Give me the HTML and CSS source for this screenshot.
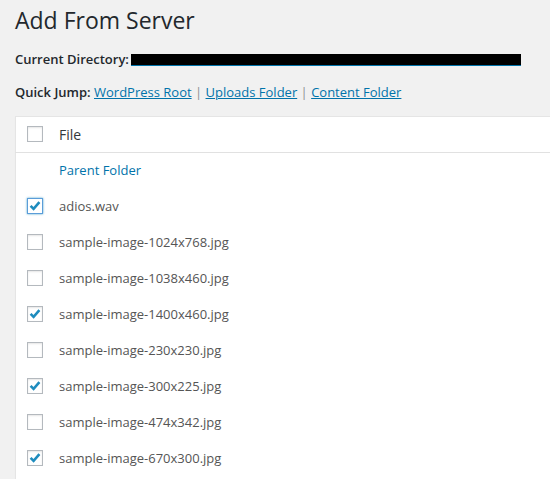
FILE: index.html
```html
<!DOCTYPE html>
<html lang="en">
<head>
<meta charset="utf-8">
<title>Add From Server</title>
<link rel="stylesheet" href="styles.css">
</head>
<body>
<div class="wrap">
  <h1 class="title">Add From Server</h1>
  <p class="info"><strong>Current Directory:</strong> <span class="redact"></span></p>
  <p class="info"><strong>Quick Jump:</strong> <a href="#">WordPress Root</a> <span class="sep">|</span> <a href="#">Uploads Folder</a> <span class="sep">|</span> <a href="#">Content Folder</a></p>
  <table class="files">
    <thead>
      <tr>
        <th class="check-col"><span class="cb"></span></th>
        <th class="name-col">File</th>
      </tr>
    </thead>
    <tbody>
      <tr><td class="check-col"></td><td class="name-col"><a href="#">Parent Folder</a></td></tr>
      <tr><td class="check-col"><span class="cb checked focus"><svg viewBox="0 0 16 16"><path d="M3.6 7.8 L6.6 10.8 L12.4 4.2"/></svg></span></td><td class="name-col">adios.wav</td></tr>
      <tr><td class="check-col"><span class="cb"></span></td><td class="name-col">sample-image-1024x768.jpg</td></tr>
      <tr><td class="check-col"><span class="cb"></span></td><td class="name-col">sample-image-1038x460.jpg</td></tr>
      <tr><td class="check-col"><span class="cb checked"><svg viewBox="0 0 16 16"><path d="M3.6 7.8 L6.6 10.8 L12.4 4.2"/></svg></span></td><td class="name-col">sample-image-1400x460.jpg</td></tr>
      <tr><td class="check-col"><span class="cb"></span></td><td class="name-col">sample-image-230x230.jpg</td></tr>
      <tr><td class="check-col"><span class="cb checked"><svg viewBox="0 0 16 16"><path d="M3.6 7.8 L6.6 10.8 L12.4 4.2"/></svg></span></td><td class="name-col">sample-image-300x225.jpg</td></tr>
      <tr><td class="check-col"><span class="cb"></span></td><td class="name-col">sample-image-474x342.jpg</td></tr>
      <tr><td class="check-col"><span class="cb checked"><svg viewBox="0 0 16 16"><path d="M3.6 7.8 L6.6 10.8 L12.4 4.2"/></svg></span></td><td class="name-col">sample-image-670x300.jpg</td></tr>
      <tr class="filler"><td class="check-col"></td><td class="name-col"></td></tr>
    </tbody>
  </table>
</div>
</body>
</html>
```
FILE: styles.css
```css
html, body {
  margin: 0;
  padding: 0;
  overflow: hidden;
  background: #f1f1f1;
}
body {
  font-family: "Open Sans", "Liberation Sans", sans-serif;
  font-size: 13px;
  line-height: 1.5;
  color: #444;
}
.wrap {
  padding-left: 15px;
}
.title {
  margin: 0 0 15px;
  padding-top: 6px;
  font-size: 23px;
  font-weight: 400;
  line-height: 29px;
  color: #23282d;
}
.info {
  margin: 13px 0;
  white-space: nowrap;
}
.info strong {
  font-weight: 600;
  color: #23282d;
}
.info a {
  color: #0073aa;
  text-decoration: underline;
}
.sep {
  color: #8c8f94;
}
.redact {
  display: inline-block;
  width: 390px;
  height: 11px;
  background: #000;
  border-bottom: 1px solid #0073aa;
  vertical-align: -2px;
  margin-left: -1px;
}
.files {
  margin-top: 14px;
  width: 560px;
  border-collapse: collapse;
  background: #fff;
  border: 1px solid #e5e5e5;
  box-shadow: 0 1px 1px rgba(0,0,0,.04);
}
.files th, .files td {
  padding: 0;
  text-align: left;
  vertical-align: middle;
}
.files thead tr {
  height: 36px;
}
.files thead th {
  border-bottom: 1px solid #e1e1e1;
  font-weight: 400;
  font-size: 14px;
  color: #32373c;
}
.files tbody tr {
  height: 36px;
}
.check-col {
  width: 22px;
  padding-left: 11px !important;
}
.name-col {
  padding-left: 10px !important;
  color: #555;
}
.name-col a {
  color: #0073aa;
  text-decoration: none;
}
.cb {
  display: block;
  width: 16px;
  height: 16px;
  box-sizing: border-box;
  border: 1px solid #b4b9be;
  background: #fff;
  box-shadow: inset 0 1px 2px rgba(0,0,0,.1);
  position: relative;
  top: -1px;
}
.cb svg {
  position: absolute;
  left: -1px;
  top: -1px;
  width: 16px;
  height: 16px;
}
.cb svg path {
  fill: none;
  stroke: #1e8cbe;
  stroke-width: 2.6;
  stroke-linecap: butt;
  stroke-linejoin: miter;
}
.cb.focus {
  border-color: #5b9dd9;
  box-shadow: 0 0 2px rgba(30,140,190,.8);
}
```
